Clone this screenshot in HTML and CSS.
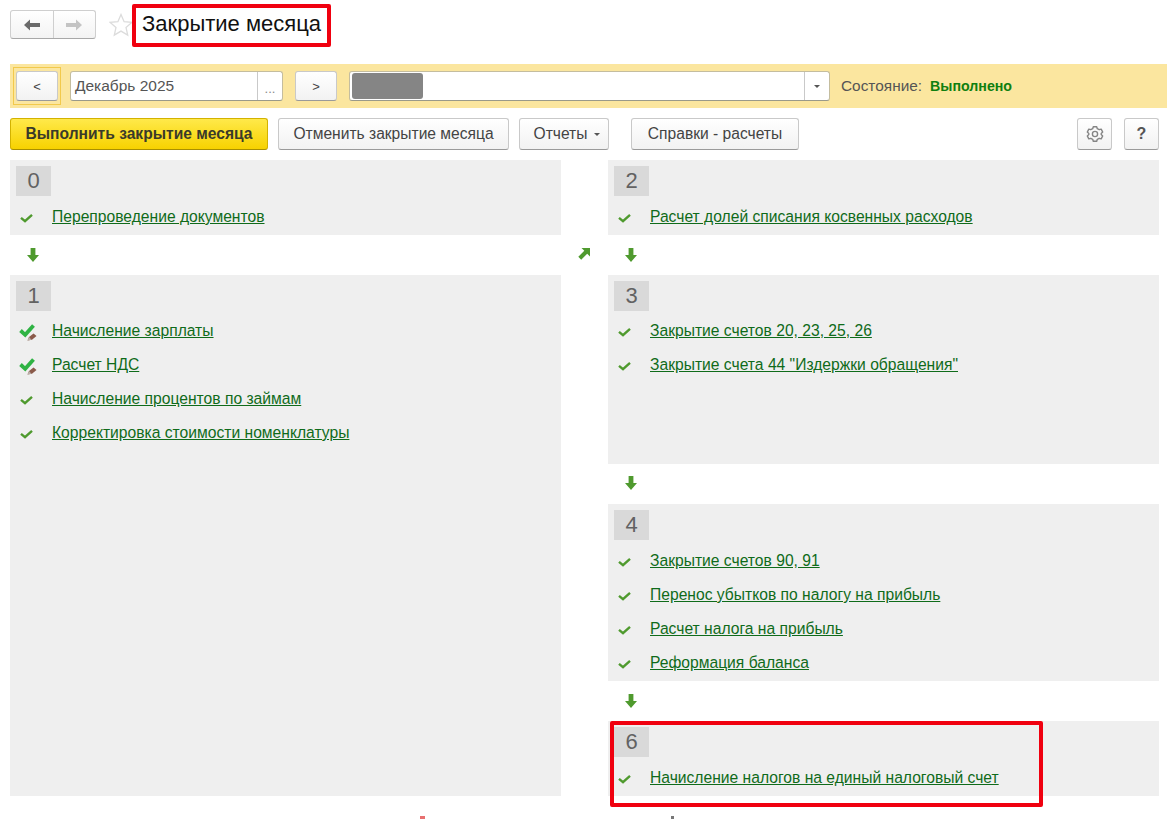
FILE: index.html
```html
<!DOCTYPE html>
<html lang="ru">
<head>
    <meta charset="UTF-8">
    <title>Закрытие месяца</title>
    <link rel="stylesheet" href="styles.css">
</head>
<body>
    <svg class="sprites" width="0" height="0">
        <symbol id="check" viewBox="0 0 13 10"><path d="M1 4.800l4 3.400L12 1.800" fill="none" stroke="#4f9a2e" stroke-width="2.400"/></symbol>
        <symbol id="check-edit" viewBox="0 0 18 20">
            <path d="M1.500 8.500l4.700 4.300L14.500 3.500" fill="none" stroke="#2fb344" stroke-width="3.800"/>
            <path d="M8.500 18.500l1.500-3.500 4.500-3.500 3 2.500-4.500 3.800z" fill="#8a5a4a"/>
            <path d="M8.500 18.500l1.500-3.500 2.500 2.800z" fill="#b9b0a8"/>
        </symbol>
        <symbol id="down" viewBox="0 0 12 14"><path d="M3.600 0h4.800v7H12l-6 7-6-7h3.600z" fill="#4f9a2e"/></symbol>
        <symbol id="up-right" viewBox="0 0 12 12"><path d="M3.500 0H12v8.500L9.200 5.700 3.200 11.700 .3 8.800l6-6z" fill="#4f9a2e"/></symbol>
    </svg>

    <header class="page-head">
        <div class="nav-buttons">
            <button class="nav-btn">
                <svg width="16" height="12" viewBox="0 0 16 12"><path d="M0 6l6-5.500V4h10v4H6v3.500z" fill="#6b6b6b"/></svg>
            </button>
            <button class="nav-btn">
                <svg width="16" height="12" viewBox="0 0 16 12"><path d="M16 6l-6-5.500V4H0v4h10v3.500z" fill="#c4c4c4"/></svg>
            </button>
        </div>
        <svg class="star" width="24" height="24" viewBox="0 0 24 24"><path d="M12 1.500l3.100 7.200 7.700.7-5.800 5.100 1.700 7.600-6.700-4-6.700 4L7 14.500 1.200 9.400l7.700-.7z" fill="none" stroke="#dcdcdc" stroke-width="1.300"/></svg>
        <h1 class="title">Закрытие месяца</h1>
    </header>

    <div class="period-bar">
        <div class="focus-frame"><button class="btn btn-small">&lt;</button></div>
        <div class="field field-period">
            <span class="field-text">Декабрь 2025</span>
            <span class="field-btn dots">...</span>
        </div>
        <button class="btn btn-small btn-next">&gt;</button>
        <div class="field field-org">
            <span class="org-blur"></span>
            <span class="field-btn"><i class="caret"></i></span>
        </div>
        <span class="state-label">Состояние:</span>
        <span class="state-value">Выполнено</span>
    </div>

    <div class="toolbar">
        <button class="btn btn-primary">Выполнить закрытие месяца</button>
        <button class="btn btn-cancel">Отменить закрытие месяца</button>
        <button class="btn btn-reports">Отчеты<i class="caret"></i></button>
        <button class="btn btn-refs">Справки - расчеты</button>
        <button class="btn btn-icon btn-gear">
            <svg width="18" height="18" viewBox="0 0 18 18" fill="none" stroke="#858585" stroke-width="1.400" stroke-linejoin="round"><path d="M7.300 1.700h3.400l.6 2 1.900 1 2-.6 1.500 3-1.500 1.400v1l1.500 1.400-1.500 3-2-.6-1.900 1-.6 2H7.300l-.6-2-1.900-1-2 .6-1.500-3L2.800 9.500v-1L1.300 7.100l1.500-3 2 .6 1.900-1z"/><circle cx="9" cy="9" r="2.600"/></svg>
        </button>
        <button class="btn btn-icon btn-help">?</button>
    </div>

    <main class="board">
        <section class="column">
            <div class="group group-short">
                <div class="group-num">0</div>
                <ul class="steps">
                    <li><svg class="ico"><use href="#check"/></svg><a href="#">Перепроведение документов</a></li>
                </ul>
            </div>
            <div class="link-row"><svg class="arrow"><use href="#down"/></svg></div>
            <div class="group group-fill">
                <div class="group-num">1</div>
                <ul class="steps steps-tight">
                    <li><svg class="ico-edit"><use href="#check-edit"/></svg><a href="#">Начисление зарплаты</a></li>
                    <li><svg class="ico-edit"><use href="#check-edit"/></svg><a href="#">Расчет НДС</a></li>
                    <li><svg class="ico"><use href="#check"/></svg><a href="#">Начисление процентов по займам</a></li>
                    <li><svg class="ico"><use href="#check"/></svg><a href="#">Корректировка стоимости номенклатуры</a></li>
                </ul>
            </div>
        </section>

        <div class="between"><svg class="arrow-diag"><use href="#up-right"/></svg></div>

        <section class="column">
            <div class="group group-short">
                <div class="group-num">2</div>
                <ul class="steps">
                    <li><svg class="ico"><use href="#check"/></svg><a href="#">Расчет долей списания косвенных расходов</a></li>
                </ul>
            </div>
            <div class="link-row"><svg class="arrow"><use href="#down"/></svg></div>
            <div class="group group-three">
                <div class="group-num">3</div>
                <ul class="steps steps-tight">
                    <li><svg class="ico"><use href="#check"/></svg><a href="#">Закрытие счетов 20, 23, 25, 26</a></li>
                    <li><svg class="ico"><use href="#check"/></svg><a href="#">Закрытие счета 44 "Издержки обращения"</a></li>
                </ul>
            </div>
            <div class="link-row link-row-up"><svg class="arrow"><use href="#down"/></svg></div>
            <div class="group group-four">
                <div class="group-num">4</div>
                <ul class="steps">
                    <li><svg class="ico"><use href="#check"/></svg><a href="#">Закрытие счетов 90, 91</a></li>
                    <li><svg class="ico"><use href="#check"/></svg><a href="#">Перенос убытков по налогу на прибыль</a></li>
                    <li><svg class="ico"><use href="#check"/></svg><a href="#">Расчет налога на прибыль</a></li>
                    <li><svg class="ico"><use href="#check"/></svg><a href="#">Реформация баланса</a></li>
                </ul>
            </div>
            <div class="link-row"><svg class="arrow"><use href="#down"/></svg></div>
            <div class="group group-short">
                <div class="group-num">6</div>
                <ul class="steps">
                    <li><svg class="ico"><use href="#check"/></svg><a href="#">Начисление налогов на единый налоговый счет</a></li>
                </ul>
                <div class="red-mark"></div>
            </div>
        </section>
    </main>

    <div class="cut-off">
        <span class="cut-red"></span>
        <span class="cut-dark"></span>
    </div>
</body>
</html>
```

FILE: styles.css
```css
* {
    box-sizing: border-box;
}

html, body {
    height: 100%;
}

body {
    margin: 0;
    font-family: "Liberation Sans", Arial, sans-serif;
    font-size: 15px;
    color: #4a4a4a;
    background: #fff;
    overflow: hidden;
}

.sprites {
    display: block;
    height: 0;
}

/* head */
.page-head {
    display: flex;
    align-items: flex-start;
    height: 64px;
    padding-left: 10px;
}

.nav-buttons {
    display: flex;
    width: 86px;
    height: 29px;
    margin-top: 10px;
    border: 1px solid #cfcfcf;
    border-bottom-color: #a8a8a8;
    border-radius: 3px;
    background: linear-gradient(#fff, #f3f3f3);
}

.nav-btn {
    flex: 1;
    border: none;
    background: none;
    padding: 0;
    display: flex;
    align-items: center;
    justify-content: center;
}

.nav-btn:first-child {
    border-right: 1px solid #cfcfcf;
}

.star {
    margin: 13px 0 0 13px;
    flex: none;
}

.title {
    width: 199px;
    height: 43px;
    margin: 4px 0 0 -1px;
    border: 4px solid #f0000f;
    border-radius: 2px;
    font-size: 22px;
    font-weight: 400;
    color: #111;
    line-height: 32px;
    padding-left: 6px;
    white-space: nowrap;
}

/* period bar */
.period-bar {
    display: flex;
    align-items: center;
    height: 44px;
    margin-left: 10px;
    padding-left: 3px;
    background: #fbe69f;
}

.focus-frame {
    padding: 3px 2px;
    border: 1px solid #f2c94c;
}

.btn {
    height: 32px;
    border: 1px solid #c9c9c9;
    border-bottom-color: #9a9a9a;
    border-radius: 3px;
    background: linear-gradient(#fff, #f2f2f2);
    font-family: inherit;
    font-size: 15.600px;
    color: #444;
    padding: 0;
    white-space: nowrap;
}

.btn-small {
    display: block;
    width: 42px;
    height: 30px;
    font-size: 13px;
}

.field {
    display: flex;
    height: 30px;
    background: #fff;
    border: 1px solid #c4bd9f;
    border-bottom-color: #9a9a8a;
    border-radius: 3px;
}

.field-period {
    width: 213px;
    margin-left: 9px;
}

.field-text {
    flex: 1;
    padding-left: 4px;
    line-height: 27px;
    font-size: 15.500px;
    color: #555;
}

.field-btn {
    width: 25px;
    border-left: 1px solid #c9c9c9;
    display: flex;
    align-items: center;
    justify-content: center;
}

.dots {
    color: #8a8a8a;
    font-size: 13px;
    padding-top: 5px;
}

.btn-next {
    margin-left: 12px;
}

.field-org {
    width: 481px;
    margin-left: 12px;
    justify-content: space-between;
}

.org-blur {
    width: 71px;
    margin: 1px 0 1px 2px;
    background: #858585;
    border-radius: 3px;
}

.caret {
    display: inline-block;
    border: 3px solid transparent;
    border-top: 3px solid #555;
    border-bottom: none;
    vertical-align: middle;
}

.state-label {
    margin-left: 11px;
    font-size: 15.400px;
    color: #555;
}

.state-value {
    margin-left: 8px;
    font-size: 14.200px;
    font-weight: 700;
    color: #0f7f0f;
}

/* toolbar */
.toolbar {
    display: flex;
    align-items: center;
    height: 32px;
    margin: 10px 8px 10px 10px;
}

.btn-primary {
    width: 258px;
    background: linear-gradient(#ffe94a, #f7d200);
    border-color: #d3b200;
    border-bottom-color: #a98f00;
    font-weight: 700;
    color: #3a3a2a;
}

.btn-cancel {
    width: 231px;
    margin-left: 10px;
}

.btn-reports {
    width: 90px;
    margin-left: 10px;
    padding-left: 6px;
}

.btn-reports .caret {
    margin-left: 7px;
}

.btn-refs {
    width: 168px;
    margin-left: 22px;
}

.btn-icon {
    width: 35px;
    display: flex;
    align-items: center;
    justify-content: center;
}

.btn-gear {
    margin-left: auto;
}

.btn-help {
    margin-left: 12px;
    font-weight: 700;
    font-size: 16px;
    color: #555;
}

/* board */
.board {
    display: flex;
    margin: 0 8px 0 10px;
}

.column {
    width: 551px;
    flex: none;
}

.between {
    width: 47px;
    flex: none;
    padding: 88px 0 0 17px;
}

.group {
    position: relative;
    background: #efefef;
    padding: 6px 6px 4px 6px;
}

.group-short {
    height: 75px;
}

.group-fill {
    height: 521px;
}

.group-three {
    height: 189px;
}

.group-four {
    height: 177px;
}

.group-num {
    width: 35px;
    height: 30px;
    background: #d9d9d9;
    font-size: 22px;
    line-height: 30px;
    text-align: center;
    color: #626262;
}

.steps {
    list-style: none;
    margin: 0;
    padding: 4px 0 0 0;
}

.steps-tight {
    padding-top: 3px;
}

.steps li {
    position: relative;
    height: 34px;
    display: flex;
    align-items: center;
    padding-left: 36px;
}

.steps a {
    color: #0f6b1a;
    font-size: 15.650px;
}

.ico {
    position: absolute;
    left: 4px;
    top: 13px;
    width: 13px;
    height: 10px;
}

.ico-edit {
    position: absolute;
    left: 3px;
    top: 8px;
    width: 18px;
    height: 20px;
}

.link-row {
    height: 40px;
    padding: 13px 0 0 17px;
}

.link-row-up {
    padding-top: 12px;
}

.arrow {
    display: block;
    width: 12px;
    height: 14px;
}

.arrow-diag {
    display: block;
    width: 12px;
    height: 12px;
}

.red-mark {
    position: absolute;
    left: 2px;
    top: 0;
    width: 433px;
    height: 86px;
    border: 4px solid #f0000f;
    border-radius: 2px;
    pointer-events: none;
}

/* tops of whatever continues below the window */
.cut-off {
    display: flex;
    height: 3px;
    margin-top: 20px;
    padding-left: 420px;
}

.cut-red {
    width: 5px;
    background: #e87070;
}

.cut-dark {
    width: 3px;
    margin-left: 246px;
    background: #777;
}
```
